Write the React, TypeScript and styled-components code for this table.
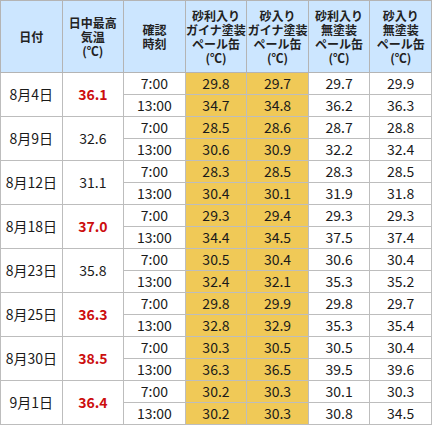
import React from 'react';
import styled, { createGlobalStyle } from 'styled-components';

const GlobalStyle = createGlobalStyle`
    body {
        margin: 0;
        background: #fff;
        font-family: "Noto Sans CJK JP", "Noto Sans", sans-serif;
    }
`;

type Reading = { time: string, a: string, b: string, c: string, d: string };
type Day = { date: string, max: string, hot: boolean, readings: Reading[] };

const days: Day[] = [
    { date: '8月4日', max: '36.1', hot: true, readings: [
        { time: '7:00', a: '29.8', b: '29.7', c: '29.7', d: '29.9' },
        { time: '13:00', a: '34.7', b: '34.8', c: '36.2', d: '36.3' },
    ] },
    { date: '8月9日', max: '32.6', hot: false, readings: [
        { time: '7:00', a: '28.5', b: '28.6', c: '28.7', d: '28.8' },
        { time: '13:00', a: '30.6', b: '30.9', c: '32.2', d: '32.4' },
    ] },
    { date: '8月12日', max: '31.1', hot: false, readings: [
        { time: '7:00', a: '28.3', b: '28.5', c: '28.3', d: '28.5' },
        { time: '13:00', a: '30.4', b: '30.1', c: '31.9', d: '31.8' },
    ] },
    { date: '8月18日', max: '37.0', hot: true, readings: [
        { time: '7:00', a: '29.3', b: '29.4', c: '29.3', d: '29.3' },
        { time: '13:00', a: '34.4', b: '34.5', c: '37.5', d: '37.4' },
    ] },
    { date: '8月23日', max: '35.8', hot: false, readings: [
        { time: '7:00', a: '30.5', b: '30.4', c: '30.6', d: '30.4' },
        { time: '13:00', a: '32.4', b: '32.1', c: '35.3', d: '35.2' },
    ] },
    { date: '8月25日', max: '36.3', hot: true, readings: [
        { time: '7:00', a: '29.8', b: '29.9', c: '29.8', d: '29.7' },
        { time: '13:00', a: '32.8', b: '32.9', c: '35.3', d: '35.4' },
    ] },
    { date: '8月30日', max: '38.5', hot: true, readings: [
        { time: '7:00', a: '30.3', b: '30.5', c: '30.5', d: '30.4' },
        { time: '13:00', a: '36.3', b: '36.5', c: '39.5', d: '39.6' },
    ] },
    { date: '9月1日', max: '36.4', hot: true, readings: [
        { time: '7:00', a: '30.2', b: '30.3', c: '30.1', d: '30.3' },
        { time: '13:00', a: '30.2', b: '30.3', c: '30.8', d: '34.5' },
    ] },
];

const headers: string[][] = [
    ['日付'],
    ['日中最高', '気温', '(℃)'],
    ['確認', '時刻'],
    ['砂利入り', 'ガイナ塗装', 'ペール缶', '(℃)'],
    ['砂入り', 'ガイナ塗装', 'ペール缶', '(℃)'],
    ['砂利入り', '無塗装', 'ペール缶', '(℃)'],
    ['砂入り', '無塗装', 'ペール缶', '(℃)'],
];

export default function App(): React.ReactElement {
    return (
        <>
            <GlobalStyle />
            <Table>
                <thead>
                    <tr>
                        {headers.map((lines, i) => (
                            <HeadCell key={i}>
                                {lines.map((l, j) => <HeadLine key={j}>{l}</HeadLine>)}
                            </HeadCell>
                        ))}
                    </tr>
                </thead>
                <tbody>
                    {days.map(day => day.readings.map((r, k) => (
                        <tr key={day.date + r.time}>
                            {k === 0 && <Cell rowSpan={2}>{day.date}</Cell>}
                            {k === 0 && <MaxCell rowSpan={2} $hot={day.hot}>{day.max}</MaxCell>}
                            <Cell>{r.time}</Cell>
                            <Cell $painted>{r.a}</Cell>
                            <Cell $painted>{r.b}</Cell>
                            <Cell>{r.c}</Cell>
                            <Cell>{r.d}</Cell>
                        </tr>
                    )))}
                </tbody>
            </Table>
        </>
    );
}

const Table = styled.table`
    width: 432px;
    table-layout: fixed;
    border-collapse: collapse;
    color: #1a1a1a;
`;

const HeadCell = styled.th`
    height: 71px;
    padding: 0;
    background: #cce6ff;
    border: 1px solid #b4b4b4;
    font-size: 12px;
    font-weight: bold;
    text-align: center;
    vertical-align: middle;
    color: #222;
    white-space: nowrap;
`;

const HeadLine = styled.div`
    height: 14px;
    line-height: 14px;
`;

const Cell = styled.td<{ $painted?: boolean }>`
    height: 21px;
    padding: 0;
    border: 1px solid #bdbdbd;
    background: ${({ $painted }) => $painted ? '#f0c957' : '#fff'};
    font-size: 14px;
    line-height: 21px;
    text-align: center;
    vertical-align: middle;
`;

const MaxCell = styled(Cell)<{ $hot: boolean }>`
    color: ${({ $hot }) => $hot ? '#cc0e0e' : '#1a1a1a'};
    font-weight: ${({ $hot }) => $hot ? 'bold' : 'normal'};
`;
